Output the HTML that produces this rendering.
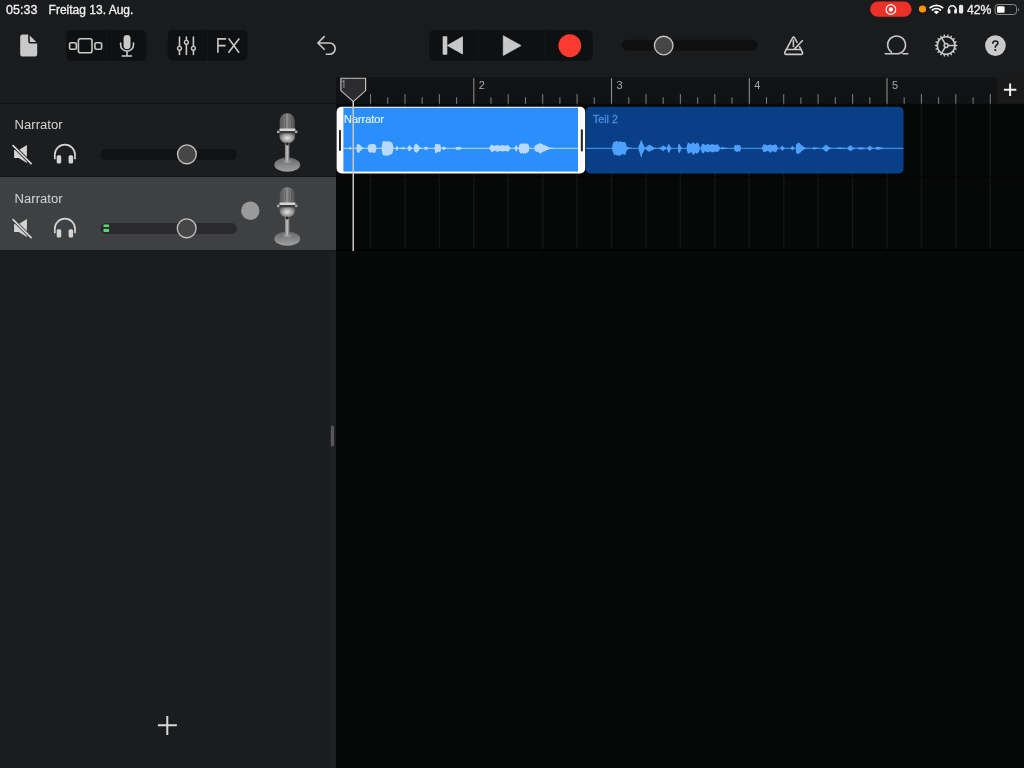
<!DOCTYPE html>
<html><head><meta charset="utf-8">
<style>
html,body{margin:0;padding:0;width:1024px;height:768px;overflow:hidden;background:#1a1b1d;}
svg{display:block;font-family:"Liberation Sans",sans-serif;will-change:transform;}
.st{font-size:12px;font-weight:normal;fill:#f2f2f2;stroke:#f2f2f2;stroke-width:0.3px;}
.rl{font-size:11px;fill:#a8a8a8;}
.tn{font-size:12.5px;fill:#d4d4d4;}
.ic{fill:none;stroke:#c9c9c9;stroke-width:1.6;stroke-linecap:round;stroke-linejoin:round;}
</style></head><body>
<svg width="1024" height="768" viewBox="0 0 1024 768">
<defs>
  <linearGradient id="mcap" x1="0" x2="1" y1="0" y2="0">
    <stop offset="0" stop-color="#555"/><stop offset="0.5" stop-color="#8e8e8e"/><stop offset="1" stop-color="#4e4e4e"/>
  </linearGradient>
  <radialGradient id="mbody" cx="0.5" cy="0.5" r="0.6">
    <stop offset="0" stop-color="#e6e6e6"/><stop offset="0.55" stop-color="#9c9c9c"/><stop offset="1" stop-color="#4a4a4a"/>
  </radialGradient>
  <linearGradient id="mneck" x1="0" x2="1" y1="0" y2="0">
    <stop offset="0" stop-color="#777"/><stop offset="0.5" stop-color="#c4c4c4"/><stop offset="1" stop-color="#666"/>
  </linearGradient>
  <linearGradient id="mbase" x1="0" x2="0" y1="0" y2="1">
    <stop offset="0" stop-color="#666"/><stop offset="1" stop-color="#a2a2a2"/>
  </linearGradient>
</defs>

<!-- backgrounds -->
<rect x="0" y="0" width="1024" height="768" fill="#1a1b1d"/>
<rect x="336" y="103" width="688" height="665" fill="#060707"/>
<rect x="336" y="77.3" width="661" height="26.5" fill="#111213"/>
<rect x="997" y="77.3" width="27" height="26.5" fill="#1a1a1b"/>
<rect x="0" y="103" width="336" height="1.5" fill="#101011"/>
<rect x="0" y="104" width="336" height="73" fill="#1c1d1f"/>
<rect x="0" y="177" width="336" height="73" fill="#3f4042"/><rect x="0" y="176" width="336" height="1" fill="#121314"/><rect x="0" y="250" width="336" height="1.5" fill="#161618"/>
<rect x="0" y="250" width="336" height="518" fill="#1b1c1e"/><rect x="329.5" y="251.5" width="6.5" height="516.5" fill="#1e1f21"/>

<!-- status bar -->
<text x="6" y="14" class="st" textLength="31.4" lengthAdjust="spacingAndGlyphs">05:33</text>
<text x="48.6" y="14" class="st" textLength="84.8" lengthAdjust="spacingAndGlyphs">Freitag 13. Aug.</text>
<rect x="870.2" y="1.6" width="41.4" height="15.2" rx="7.6" fill="#ee3128"/>
<circle cx="890.9" cy="9.5" r="4.8" fill="none" stroke="#fff" stroke-width="1.2"/>
<circle cx="890.9" cy="9.5" r="2.2" fill="#fff"/>
<circle cx="922.5" cy="9" r="3.6" fill="#ff9500"/>
<path d="M930.2,7.6 A9.5,9.5 0 0 1 942.6,7.6 M932.4,10 A6.2,6.2 0 0 1 940.4,10" fill="none" stroke="#fff" stroke-width="1.8" stroke-linecap="round"/>
<path d="M933.8,12 L936.4,14.2 L939,12 A3.8,3.8 0 0 0 933.8,12Z" fill="#fff"/>
<path d="M948.5,11.5 V9.6 A3.8,3.8 0 0 1 956.1,9.6 V11.5" fill="none" stroke="#f4f4f4" stroke-width="1.4"/>
<rect x="947.7" y="9.2" width="2.7" height="4.4" rx="0.9" fill="#f4f4f4"/>
<rect x="954.2" y="9.2" width="2.7" height="4.4" rx="0.9" fill="#f4f4f4"/>
<rect x="958.9" y="4.8" width="4.3" height="8.8" rx="1.6" fill="#e6e6e6"/>
<text x="967" y="14.3" class="st" style="font-size:12px" textLength="24.5" lengthAdjust="spacingAndGlyphs">42%</text>
<rect x="995.1" y="4.5" width="21.4" height="10" rx="3" fill="none" stroke="#8a8a8a" stroke-width="1"/>
<rect x="997" y="6.3" width="7.6" height="6.4" rx="1.3" fill="#fff"/>
<path d="M1018,8 A1.8,1.8 0 0 1 1018,11.3 Z" fill="#8a8a8a"/>

<!-- toolbar -->
<path d="M22.5,34.6 H28.8 L37.2,43 V54.3 A2.3,2.3 0 0 1 34.9,56.6 H22.5 A2.3,2.3 0 0 1 20.2,54.3 V36.9 A2.3,2.3 0 0 1 22.5,34.6 Z" fill="#c9c9c9"/>
<path d="M29,33.6 V41.5 A1.3,1.3 0 0 0 30.3,42.8 H38.2" fill="none" stroke="#1a1b1d" stroke-width="1.6"/>

<rect x="66.3" y="29.7" width="80.1" height="31.1" rx="5" fill="#0f1011"/>
<rect x="106.1" y="29.8" width="1.2" height="31" fill="#151618"/>
<rect x="69.6" y="42.8" width="6.7" height="6.5" rx="1.3" class="ic"/>
<rect x="78.4" y="38.8" width="13.6" height="14" rx="2" class="ic"/>
<rect x="94.9" y="42.8" width="6.7" height="6.5" rx="1.3" class="ic"/>
<rect x="123.6" y="34.9" width="6.9" height="14.2" rx="3.45" fill="#c9c9c9"/>
<path d="M120.6,43 V44.65 A6.45,6.45 0 0 0 133.5,44.65 V43 M127.05,51.5 V55.5 M122.2,56 H131.6" class="ic"/>

<rect x="167.8" y="29.7" width="79.6" height="31.1" rx="5" fill="#0f1011"/>
<rect x="206.9" y="29.8" width="1.2" height="31" fill="#151618"/>
<path d="M179.5,37 V54.5 M186.4,37 V54.5 M193.4,37 V54.5" class="ic"/>
<circle cx="179.5" cy="48.3" r="1.95" fill="#0f1011" stroke="#c9c9c9" stroke-width="1.4"/>
<circle cx="186.4" cy="42.3" r="1.95" fill="#0f1011" stroke="#c9c9c9" stroke-width="1.4"/>
<circle cx="193.4" cy="48.3" r="1.95" fill="#0f1011" stroke="#c9c9c9" stroke-width="1.4"/>
<path d="M217.9,52.7 V38.9 H226.1 M217.9,45.6 H225.6" class="ic" style="stroke-linecap:butt;stroke-linejoin:miter"/>
<path d="M228.6,38.4 L239.1,52.8 M239.3,38.4 L228.4,52.8" class="ic" style="stroke-linecap:butt"/>

<path d="M324.2,36.6 L317.9,43 L324.2,49.3 M318.4,43 H329.6 A5.6,5.6 0 0 1 329.6,54.2 H326.3" class="ic"/>

<rect x="429.3" y="29.7" width="163.5" height="31.1" rx="5" fill="#0f1011"/>
<rect x="477.4" y="29.8" width="1.2" height="31" fill="#151618"/>
<rect x="544.1" y="29.8" width="1.2" height="31" fill="#151618"/>
<rect x="442.7" y="36.2" width="4.6" height="18.5" rx="0.8" fill="#c9c9c9"/>
<path d="M462.5,36.8 V54 L447.4,45.4 Z" fill="#c9c9c9" stroke="#c9c9c9" stroke-width="0.8" stroke-linejoin="round"/>
<path d="M503.3,35.8 V55.4 L521,45.6 Z" fill="#c9c9c9" stroke="#c9c9c9" stroke-width="0.8" stroke-linejoin="round"/>
<circle cx="569.8" cy="45.6" r="11.4" fill="#fe3b30"/>

<rect x="621.7" y="39.8" width="136" height="10.6" rx="5.3" fill="#0f0f10"/>
<circle cx="663.7" cy="45.5" r="9.3" fill="#464647" stroke="#c2c2c2" stroke-width="1.35"/>

<path d="M797.1,42.3 L794.6,37.9 Q793.6,36.4 792.6,37.9 L784.9,52.1 Q784.2,54.4 786.3,54.4 H801 Q803.1,54.4 802.4,52.1 L799.5,46.6" class="ic"/>
<path d="M786.3,49.5 H801 M793.4,40.4 V46.4 M802.3,40.7 L794.6,48.9" class="ic"/>

<path d="M885.3,53.8 H896.5 A8.9,8.9 0 1 0 891.5,52.2 M902.9,53.8 H907.8" class="ic"/>

<path d="M955.36,43.87 L955.46,44.60 L957.39,45.11 L957.39,45.89 L955.46,46.40 L955.36,47.13 L955.20,47.85 L956.85,48.99 L956.58,49.73 L954.58,49.55 L954.24,50.20 L953.85,50.82 L955.00,52.46 L954.50,53.06 L952.69,52.20 L952.14,52.70 L951.56,53.15 L952.09,55.08 L951.41,55.48 L950.00,54.05 L949.31,54.33 L948.61,54.56 L948.45,56.55 L947.67,56.69 L946.84,54.87 L946.10,54.90 L945.36,54.87 L944.53,56.69 L943.75,56.55 L943.59,54.56 L942.89,54.33 L942.20,54.05 L940.79,55.48 L940.11,55.08 L940.64,53.15 L940.06,52.70 L939.51,52.20 L937.70,53.06 L937.20,52.46 L938.35,50.82 L937.96,50.20 L937.62,49.55 L935.62,49.73 L935.35,48.99 L937.00,47.85 L936.84,47.13 L936.74,46.40 L934.81,45.89 L934.81,45.11 L936.74,44.60 L936.84,43.87 L937.00,43.15 L935.35,42.01 L935.62,41.27 L937.62,41.45 L937.96,40.80 L938.35,40.18 L937.20,38.54 L937.70,37.94 L939.51,38.80 L940.06,38.30 L940.64,37.85 L940.11,35.92 L940.79,35.52 L942.20,36.95 L942.89,36.67 L943.59,36.44 L943.75,34.45 L944.53,34.31 L945.36,36.13 L946.10,36.10 L946.84,36.13 L947.67,34.31 L948.45,34.45 L948.61,36.44 L949.31,36.67 L950.00,36.95 L951.41,35.52 L952.09,35.92 L951.56,37.85 L952.14,38.30 L952.69,38.80 L954.50,37.94 L955.00,38.54 L953.85,40.18 L954.24,40.80 L954.58,41.45 L956.58,41.27 L956.85,42.01 L955.20,43.15Z" fill="#c9c9c9"/>
<circle cx="946.1" cy="45.5" r="8.75" fill="#1a1b1d" stroke="#c9c9c9" stroke-width="1.5"/>
<path d="M948,45.5 H954.9 M945.15,47.15 L941.7,53.1 M945.15,43.85 L941.7,37.9" class="ic" style="stroke-width:1.5"/>
<circle cx="946.1" cy="45.5" r="2" fill="none" stroke="#c9c9c9" stroke-width="1.4"/>

<circle cx="995.4" cy="45.6" r="10.4" fill="#c9c9c9"/>
<path d="M992.9,43.2 C992.9,41.7 994,41 995.4,41 C996.9,41 997.9,41.9 997.9,43.1 C997.9,44.4 996.9,44.9 996.1,45.5 C995.6,45.9 995.4,46.3 995.4,47.3" fill="none" stroke="#1a1b1d" stroke-width="1.6" stroke-linecap="round"/><circle cx="995.3" cy="50" r="1.1" fill="#1a1b1d"/>

<!-- ruler -->
<line x1="353.3" y1="97.2" x2="353.3" y2="103.8" stroke="#767676" stroke-width="1.1"/><line x1="370.5" y1="94" x2="370.5" y2="103.8" stroke="#767676" stroke-width="1.1"/><line x1="387.7" y1="97.2" x2="387.7" y2="103.8" stroke="#767676" stroke-width="1.1"/><line x1="405.0" y1="94" x2="405.0" y2="103.8" stroke="#767676" stroke-width="1.1"/><line x1="422.2" y1="97.2" x2="422.2" y2="103.8" stroke="#767676" stroke-width="1.1"/><line x1="439.4" y1="94" x2="439.4" y2="103.8" stroke="#767676" stroke-width="1.1"/><line x1="456.6" y1="97.2" x2="456.6" y2="103.8" stroke="#767676" stroke-width="1.1"/><line x1="473.8" y1="78" x2="473.8" y2="103.8" stroke="#8a8a8a" stroke-width="1.1"/><line x1="491.0" y1="97.2" x2="491.0" y2="103.8" stroke="#767676" stroke-width="1.1"/><line x1="508.2" y1="94" x2="508.2" y2="103.8" stroke="#767676" stroke-width="1.1"/><line x1="525.5" y1="97.2" x2="525.5" y2="103.8" stroke="#767676" stroke-width="1.1"/><line x1="542.7" y1="94" x2="542.7" y2="103.8" stroke="#767676" stroke-width="1.1"/><line x1="559.9" y1="97.2" x2="559.9" y2="103.8" stroke="#767676" stroke-width="1.1"/><line x1="577.1" y1="94" x2="577.1" y2="103.8" stroke="#767676" stroke-width="1.1"/><line x1="594.3" y1="97.2" x2="594.3" y2="103.8" stroke="#767676" stroke-width="1.1"/><line x1="611.5" y1="78" x2="611.5" y2="103.8" stroke="#8a8a8a" stroke-width="1.1"/><line x1="628.8" y1="97.2" x2="628.8" y2="103.8" stroke="#767676" stroke-width="1.1"/><line x1="646.0" y1="94" x2="646.0" y2="103.8" stroke="#767676" stroke-width="1.1"/><line x1="663.2" y1="97.2" x2="663.2" y2="103.8" stroke="#767676" stroke-width="1.1"/><line x1="680.4" y1="94" x2="680.4" y2="103.8" stroke="#767676" stroke-width="1.1"/><line x1="697.6" y1="97.2" x2="697.6" y2="103.8" stroke="#767676" stroke-width="1.1"/><line x1="714.8" y1="94" x2="714.8" y2="103.8" stroke="#767676" stroke-width="1.1"/><line x1="732.0" y1="97.2" x2="732.0" y2="103.8" stroke="#767676" stroke-width="1.1"/><line x1="749.3" y1="78" x2="749.3" y2="103.8" stroke="#8a8a8a" stroke-width="1.1"/><line x1="766.5" y1="97.2" x2="766.5" y2="103.8" stroke="#767676" stroke-width="1.1"/><line x1="783.7" y1="94" x2="783.7" y2="103.8" stroke="#767676" stroke-width="1.1"/><line x1="800.9" y1="97.2" x2="800.9" y2="103.8" stroke="#767676" stroke-width="1.1"/><line x1="818.1" y1="94" x2="818.1" y2="103.8" stroke="#767676" stroke-width="1.1"/><line x1="835.3" y1="97.2" x2="835.3" y2="103.8" stroke="#767676" stroke-width="1.1"/><line x1="852.6" y1="94" x2="852.6" y2="103.8" stroke="#767676" stroke-width="1.1"/><line x1="869.8" y1="97.2" x2="869.8" y2="103.8" stroke="#767676" stroke-width="1.1"/><line x1="887.0" y1="78" x2="887.0" y2="103.8" stroke="#8a8a8a" stroke-width="1.1"/><line x1="904.2" y1="97.2" x2="904.2" y2="103.8" stroke="#767676" stroke-width="1.1"/><line x1="921.4" y1="94" x2="921.4" y2="103.8" stroke="#767676" stroke-width="1.1"/><line x1="938.6" y1="97.2" x2="938.6" y2="103.8" stroke="#767676" stroke-width="1.1"/><line x1="955.8" y1="94" x2="955.8" y2="103.8" stroke="#767676" stroke-width="1.1"/><line x1="973.1" y1="97.2" x2="973.1" y2="103.8" stroke="#767676" stroke-width="1.1"/><line x1="990.3" y1="94" x2="990.3" y2="103.8" stroke="#767676" stroke-width="1.1"/>
<text x="478.8" y="88.5" class="rl">2</text><text x="616.5" y="88.5" class="rl">3</text><text x="754.3" y="88.5" class="rl">4</text><text x="892.0" y="88.5" class="rl">5</text>
<path d="M1003.9,89.7 H1016.3 M1010.1,83.5 V95.9" stroke="#f0f0f0" stroke-width="2" fill="none"/>

<!-- grid -->
<line x1="370.5" y1="104" x2="370.5" y2="249.5" stroke="#131414" stroke-width="1.6"/><line x1="405.0" y1="104" x2="405.0" y2="249.5" stroke="#131414" stroke-width="1.6"/><line x1="439.4" y1="104" x2="439.4" y2="249.5" stroke="#131414" stroke-width="1.6"/><line x1="473.8" y1="104" x2="473.8" y2="249.5" stroke="#131414" stroke-width="1.6"/><line x1="508.2" y1="104" x2="508.2" y2="249.5" stroke="#131414" stroke-width="1.6"/><line x1="542.7" y1="104" x2="542.7" y2="249.5" stroke="#131414" stroke-width="1.6"/><line x1="577.1" y1="104" x2="577.1" y2="249.5" stroke="#131414" stroke-width="1.6"/><line x1="611.5" y1="104" x2="611.5" y2="249.5" stroke="#131414" stroke-width="1.6"/><line x1="646.0" y1="104" x2="646.0" y2="249.5" stroke="#131414" stroke-width="1.6"/><line x1="680.4" y1="104" x2="680.4" y2="249.5" stroke="#131414" stroke-width="1.6"/><line x1="714.8" y1="104" x2="714.8" y2="249.5" stroke="#131414" stroke-width="1.6"/><line x1="749.3" y1="104" x2="749.3" y2="249.5" stroke="#131414" stroke-width="1.6"/><line x1="783.7" y1="104" x2="783.7" y2="249.5" stroke="#131414" stroke-width="1.6"/><line x1="818.1" y1="104" x2="818.1" y2="249.5" stroke="#131414" stroke-width="1.6"/><line x1="852.6" y1="104" x2="852.6" y2="249.5" stroke="#131414" stroke-width="1.6"/><line x1="887.0" y1="104" x2="887.0" y2="249.5" stroke="#131414" stroke-width="1.6"/><line x1="921.4" y1="104" x2="921.4" y2="249.5" stroke="#131414" stroke-width="1.6"/><line x1="955.8" y1="104" x2="955.8" y2="249.5" stroke="#131414" stroke-width="1.6"/><line x1="990.3" y1="104" x2="990.3" y2="249.5" stroke="#131414" stroke-width="1.6"/>
<rect x="336" y="176.5" width="688" height="1" fill="#050505"/>
<rect x="336" y="249.3" width="688" height="1.8" fill="#020202"/>

<!-- regions -->
<rect x="336.6" y="106.8" width="248.6" height="66.6" rx="5" fill="#ffffff"/>
<rect x="343.4" y="107.8" width="234.6" height="63.8" fill="#2b8ffb"/>
<rect x="339" y="129.7" width="2" height="21.3" rx="1" fill="#2a2a2a"/>
<rect x="580.8" y="129.2" width="2.1" height="22.4" rx="1" fill="#2a2a2a"/>
<text x="344" y="122.9" style="font-size:10.5px;fill:#e4f0ff;stroke:#e4f0ff;stroke-width:0.2px" textLength="40" lengthAdjust="spacingAndGlyphs">Narrator</text>
<rect x="343.4" y="147.8" width="234.6" height="1" fill="#b4d6fc"/>
<path d="M349.5,147.8 L350.2,146.5 L350.8,147.2 L351.5,147.8 L351.5,148.7 L350.8,149.2 L350.2,150.2 L349.5,148.8Z M356.5,145.6 L357.3,144.5 L358.2,143.8 L359.0,143.9 L359.8,144.9 L360.7,145.6 L361.5,146.5 L362.3,147.3 L363.2,147.8 L364.0,147.8 L364.0,148.8 L363.2,148.8 L362.3,149.2 L361.5,150.0 L360.7,150.7 L359.8,151.6 L359.0,153.3 L358.2,152.4 L357.3,152.5 L356.5,150.7Z M367.5,147.8 L368.3,145.0 L369.1,144.4 L370.0,144.2 L370.8,144.0 L371.6,144.3 L372.4,143.9 L373.2,144.1 L374.0,143.8 L374.9,144.3 L375.7,145.3 L376.5,147.8 L376.5,148.7 L375.7,151.2 L374.9,152.9 L374.0,153.1 L373.2,152.6 L372.4,152.3 L371.6,152.7 L370.8,152.5 L370.0,152.2 L369.1,152.5 L368.3,151.2 L367.5,148.8Z M381.5,147.8 L382.3,142.9 L383.1,141.0 L383.9,141.2 L384.7,141.4 L385.5,141.0 L386.3,141.5 L387.1,142.1 L387.9,141.3 L388.7,141.0 L389.5,141.6 L390.3,142.1 L391.1,141.9 L391.9,142.4 L392.7,144.1 L393.5,147.8 L393.5,148.9 L392.7,152.2 L391.9,154.6 L391.1,153.9 L390.3,154.4 L389.5,155.3 L388.7,155.1 L387.9,156.4 L387.1,154.9 L386.3,155.4 L385.5,156.6 L384.7,155.1 L383.9,155.6 L383.1,155.2 L382.3,153.8 L381.5,148.8Z M395.5,147.6 L396.4,146.3 L397.2,146.0 L398.1,147.4 L399.0,147.8 L399.0,148.9 L398.1,149.1 L397.2,150.5 L396.4,150.5 L395.5,149.0Z M400.5,147.8 L401.0,147.3 L401.5,147.5 L402.0,147.8 L402.0,148.8 L401.5,149.0 L401.0,149.3 L400.5,148.8Z M402.5,147.8 L403.2,146.6 L403.8,147.2 L404.5,147.8 L404.5,148.9 L403.8,149.5 L403.2,150.1 L402.5,148.9Z M407.5,147.4 L408.3,146.4 L409.2,145.3 L410.0,145.6 L410.8,146.7 L411.7,147.6 L412.5,147.8 L412.5,148.7 L411.7,148.9 L410.8,149.8 L410.0,150.7 L409.2,151.4 L408.3,150.2 L407.5,149.3Z M414.0,145.9 L414.8,144.6 L415.7,144.1 L416.5,143.6 L417.3,144.7 L418.2,145.2 L419.0,146.3 L419.8,147.2 L420.7,147.8 L421.5,147.8 L421.5,148.7 L420.7,148.8 L419.8,149.3 L419.0,150.0 L418.2,151.4 L417.3,152.3 L416.5,152.8 L415.7,152.2 L414.8,152.1 L414.0,150.4Z M424.0,147.8 L424.8,147.1 L425.5,146.8 L426.2,146.4 L427.0,147.2 L427.8,147.6 L428.5,147.8 L428.5,148.8 L427.8,149.1 L427.0,149.4 L426.2,150.3 L425.5,150.0 L424.8,149.3 L424.0,148.7Z M434.5,147.8 L435.3,143.7 L436.1,143.9 L436.9,143.9 L437.8,144.1 L438.6,144.5 L439.4,144.3 L440.2,144.3 L441.0,147.8 L441.0,148.9 L440.2,152.8 L439.4,152.0 L438.6,151.6 L437.8,152.3 L436.9,152.3 L436.1,153.2 L435.3,153.4 L434.5,148.8Z M441.5,147.8 L442.2,147.3 L443.0,147.0 L443.8,146.6 L444.5,146.8 L445.2,147.4 L446.0,147.8 L446.0,148.8 L445.2,149.3 L444.5,149.8 L443.8,150.2 L443.0,149.4 L442.2,149.2 L441.5,148.8Z M455.5,147.8 L456.2,146.9 L457.0,146.9 L457.8,146.9 L458.5,147.0 L459.2,146.8 L460.0,147.0 L460.8,147.1 L461.5,147.8 L461.5,148.7 L460.8,149.6 L460.0,149.4 L459.2,149.9 L458.5,149.6 L457.8,150.0 L457.0,149.7 L456.2,149.5 L455.5,148.8Z M489.0,147.8 L489.8,146.8 L490.6,145.8 L491.4,144.5 L492.2,144.9 L493.0,145.2 L493.8,145.4 L494.6,146.0 L495.4,145.5 L496.2,145.2 L497.0,145.2 L497.8,145.1 L498.6,145.2 L499.4,145.8 L500.1,145.7 L500.9,145.3 L501.7,145.0 L502.5,145.3 L503.3,145.3 L504.1,145.2 L504.9,145.9 L505.7,145.6 L506.5,145.5 L507.3,145.1 L508.1,144.9 L508.9,145.9 L509.7,146.8 L510.5,147.8 L510.5,148.8 L509.7,149.8 L508.9,150.9 L508.1,151.8 L507.3,151.3 L506.5,151.2 L505.7,151.3 L504.9,150.7 L504.1,151.4 L503.3,151.3 L502.5,151.6 L501.7,151.3 L500.9,150.9 L500.1,150.9 L499.4,151.1 L498.6,151.8 L497.8,151.5 L497.0,151.8 L496.2,151.3 L495.4,151.1 L494.6,150.5 L493.8,150.9 L493.0,151.7 L492.2,152.1 L491.4,152.2 L490.6,150.4 L489.8,149.8 L489.0,148.8Z M514.5,147.5 L515.3,146.4 L516.1,144.8 L516.9,146.3 L517.7,147.6 L518.5,147.8 L518.5,148.9 L517.7,149.1 L516.9,150.6 L516.1,152.0 L515.3,150.2 L514.5,149.1Z M518.5,147.8 L519.3,145.0 L520.1,144.0 L520.9,143.3 L521.6,143.9 L522.4,143.4 L523.2,143.2 L524.0,143.8 L524.8,143.7 L525.6,143.1 L526.4,143.9 L527.1,143.6 L527.9,144.0 L528.7,144.9 L529.5,147.8 L529.5,148.8 L528.7,151.2 L527.9,152.4 L527.1,152.8 L526.4,152.6 L525.6,154.0 L524.8,152.9 L524.0,153.4 L523.2,154.1 L522.4,152.7 L521.6,153.0 L520.9,153.9 L520.1,152.9 L519.3,151.4 L518.5,148.8Z M534.5,145.9 L535.3,145.4 L536.1,144.8 L536.9,144.4 L537.7,144.5 L538.5,143.7 L539.3,143.8 L540.1,142.8 L540.9,143.8 L541.7,143.7 L542.5,144.2 L543.3,145.0 L544.2,145.2 L545.0,145.3 L545.8,145.7 L546.6,146.1 L547.4,146.4 L548.2,146.9 L549.0,147.1 L549.8,147.5 L550.6,147.7 L551.4,147.8 L552.2,147.8 L553.0,147.8 L553.0,148.8 L552.2,148.8 L551.4,148.7 L550.6,148.8 L549.8,149.1 L549.0,149.4 L548.2,149.7 L547.4,150.1 L546.6,150.2 L545.8,150.5 L545.0,151.4 L544.2,151.0 L543.3,151.8 L542.5,151.9 L541.7,153.0 L540.9,152.4 L540.1,154.3 L539.3,152.7 L538.5,152.6 L537.7,151.6 L536.9,151.7 L536.1,152.1 L535.3,150.8 L534.5,150.8Z" fill="#b9d9fc"/>

<rect x="585.8" y="106.8" width="317.7" height="66.6" rx="4.5" fill="#093f87"/>
<text x="593" y="122.6" style="font-size:10.5px;fill:#4a8fe0;stroke:#4a8fe0;stroke-width:0.3px" textLength="24.8" lengthAdjust="spacingAndGlyphs">Teil 2</text>
<rect x="586" y="147.8" width="317.5" height="1" fill="#4a9cf8"/>
<path d="M612.0,147.8 L612.8,144.0 L613.6,142.3 L614.4,141.3 L615.2,142.0 L615.9,141.0 L616.7,141.1 L617.5,141.6 L618.3,141.7 L619.1,141.3 L619.9,141.8 L620.7,141.3 L621.5,141.7 L622.3,142.2 L623.1,142.1 L623.8,141.9 L624.6,142.1 L625.4,142.2 L626.2,144.5 L627.0,147.8 L627.0,148.8 L626.2,151.8 L625.4,154.7 L624.6,155.1 L623.8,154.1 L623.1,154.9 L622.3,153.8 L621.5,154.6 L620.7,155.6 L619.9,155.5 L619.1,156.3 L618.3,154.9 L617.5,155.7 L616.7,155.3 L615.9,154.7 L615.2,154.6 L614.4,155.5 L613.6,153.4 L612.8,152.0 L612.0,148.8Z M626.0,146.7 L626.8,146.4 L627.5,146.8 L628.2,147.1 L629.0,147.5 L629.8,147.7 L630.5,147.8 L631.2,147.8 L632.0,147.8 L632.0,148.7 L631.2,148.7 L630.5,148.8 L629.8,148.9 L629.0,149.0 L628.2,149.5 L627.5,149.7 L626.8,150.5 L626.0,149.8Z M638.5,146.4 L639.3,144.7 L640.1,142.7 L640.8,140.5 L641.6,140.2 L642.4,142.5 L643.2,143.9 L643.9,145.8 L644.7,147.4 L645.5,147.8 L645.5,148.8 L644.7,149.3 L643.9,150.9 L643.2,152.2 L642.4,153.8 L641.6,157.4 L640.8,156.4 L640.1,153.9 L639.3,151.6 L638.5,150.0Z M645.5,147.4 L646.3,146.9 L647.1,146.3 L647.9,145.8 L648.7,145.1 L649.5,144.6 L650.3,145.3 L651.2,145.7 L652.0,146.1 L652.8,146.7 L653.6,147.2 L654.4,147.7 L655.2,147.8 L656.0,147.8 L656.0,148.8 L655.2,148.8 L654.4,148.9 L653.6,149.4 L652.8,149.9 L652.0,150.5 L651.2,150.6 L650.3,150.9 L649.5,151.7 L648.7,151.6 L647.9,150.9 L647.1,150.4 L646.3,149.7 L645.5,149.1Z M658.5,147.8 L659.3,147.8 L660.1,147.6 L660.9,147.1 L661.7,146.7 L662.5,146.1 L663.3,145.4 L664.1,146.1 L664.9,146.8 L665.7,147.1 L666.5,147.6 L666.5,148.9 L665.7,149.4 L664.9,149.7 L664.1,150.3 L663.3,151.3 L662.5,150.6 L661.7,149.9 L660.9,149.6 L660.1,148.9 L659.3,148.8 L658.5,148.8Z M667.0,147.0 L667.8,145.3 L668.5,143.7 L669.2,143.9 L670.0,145.9 L670.8,147.3 L671.5,147.8 L671.5,148.7 L670.8,149.4 L670.0,151.0 L669.2,152.6 L668.5,152.9 L667.8,151.5 L667.0,149.6Z M678.0,145.5 L678.8,143.8 L679.6,144.0 L680.4,145.7 L681.2,147.3 L682.0,147.8 L682.0,148.7 L681.2,149.3 L680.4,150.9 L679.6,153.2 L678.8,152.5 L678.0,151.5Z M686.5,147.8 L687.3,144.6 L688.1,142.2 L688.9,143.2 L689.7,142.9 L690.5,143.9 L691.3,144.2 L692.1,142.8 L692.9,142.3 L693.6,143.1 L694.4,142.9 L695.2,144.2 L696.0,143.8 L696.8,142.8 L697.6,142.6 L698.4,143.4 L699.2,144.9 L700.0,147.8 L700.0,148.8 L699.2,151.5 L698.4,152.7 L697.6,153.6 L696.8,153.6 L696.0,153.4 L695.2,152.2 L694.4,154.4 L693.6,154.2 L692.9,154.9 L692.1,153.0 L691.3,152.2 L690.5,152.2 L689.7,153.6 L688.9,152.7 L688.1,154.3 L687.3,151.7 L686.5,148.9Z M700.5,147.8 L701.3,146.2 L702.1,144.3 L702.9,143.9 L703.8,143.8 L704.6,144.5 L705.4,145.2 L706.2,144.5 L707.0,144.4 L707.8,143.6 L708.6,144.2 L709.4,144.8 L710.2,145.1 L711.1,144.5 L711.9,144.1 L712.7,144.3 L713.5,144.4 L714.3,144.7 L715.1,145.1 L715.9,144.7 L716.8,144.4 L717.6,144.1 L718.4,145.2 L719.2,146.3 L720.0,147.8 L720.0,148.8 L719.2,150.5 L718.4,151.2 L717.6,152.0 L716.8,151.7 L715.9,151.5 L715.1,152.0 L714.3,151.6 L713.5,152.6 L712.7,151.9 L711.9,152.4 L711.1,151.8 L710.2,151.3 L709.4,152.0 L708.6,152.2 L707.8,152.5 L707.0,151.7 L706.2,152.3 L705.4,151.3 L704.6,151.6 L703.8,152.9 L702.9,153.3 L702.1,152.7 L701.3,150.7 L700.5,148.8Z M720.5,147.8 L721.2,147.5 L722.0,147.3 L722.8,147.3 L723.5,147.2 L724.2,147.5 L725.0,147.7 L725.8,147.8 L726.5,147.8 L726.5,148.9 L725.8,148.9 L725.0,148.9 L724.2,149.0 L723.5,149.5 L722.8,149.3 L722.0,149.5 L721.2,149.0 L720.5,148.8Z M734.0,147.8 L734.8,145.0 L735.6,145.1 L736.3,145.2 L737.1,144.9 L737.9,144.8 L738.7,145.4 L739.4,145.1 L740.2,145.3 L741.0,147.8 L741.0,148.8 L740.2,151.5 L739.4,151.7 L738.7,150.9 L737.9,151.5 L737.1,152.1 L736.3,151.8 L735.6,151.1 L734.8,151.6 L734.0,148.8Z M762.0,147.8 L762.8,146.0 L763.6,144.2 L764.4,144.5 L765.2,144.6 L766.0,144.6 L766.8,145.5 L767.6,145.4 L768.4,145.1 L769.2,144.9 L770.0,144.4 L770.8,144.4 L771.6,144.9 L772.4,145.6 L773.2,145.1 L774.0,145.1 L774.8,144.3 L775.6,144.6 L776.4,144.7 L777.2,146.6 L778.0,147.8 L778.0,148.8 L777.2,149.9 L776.4,151.6 L775.6,152.2 L774.8,152.3 L774.0,151.5 L773.2,151.3 L772.4,151.4 L771.6,151.4 L770.8,152.7 L770.0,152.8 L769.2,151.5 L768.4,151.6 L767.6,151.1 L766.8,151.1 L766.0,151.6 L765.2,152.1 L764.4,151.7 L763.6,152.5 L762.8,150.4 L762.0,148.7Z M780.5,147.6 L781.2,146.8 L782.0,145.7 L782.8,146.0 L783.5,147.1 L784.2,147.8 L785.0,147.8 L785.0,148.8 L784.2,148.9 L783.5,149.6 L782.8,150.4 L782.0,150.7 L781.2,149.6 L780.5,149.0Z M791.0,147.6 L791.9,146.3 L792.8,146.1 L793.6,147.3 L794.5,147.8 L794.5,148.7 L793.6,149.2 L792.8,150.3 L791.9,150.1 L791.0,149.0Z M796.0,144.5 L796.8,143.9 L797.6,142.9 L798.4,142.8 L799.2,142.7 L800.0,143.5 L800.8,144.5 L801.7,145.3 L802.5,145.9 L803.3,146.3 L804.1,146.9 L804.9,147.6 L805.7,147.8 L806.5,147.8 L806.5,148.8 L805.7,148.8 L804.9,149.1 L804.1,149.6 L803.3,150.1 L802.5,150.6 L801.7,150.9 L800.8,151.9 L800.0,152.9 L799.2,153.1 L798.4,154.5 L797.6,153.4 L796.8,153.4 L796.0,152.5Z M812.5,147.8 L813.2,147.5 L814.0,147.4 L814.8,147.0 L815.5,147.5 L816.2,147.6 L817.0,147.7 L817.8,147.8 L818.5,147.8 L818.5,148.9 L817.8,148.8 L817.0,148.9 L816.2,149.1 L815.5,149.0 L814.8,149.7 L814.0,149.2 L813.2,149.2 L812.5,148.8Z M822.5,147.4 L823.3,146.9 L824.1,146.4 L825.0,145.4 L825.8,144.6 L826.6,145.2 L827.4,145.5 L828.2,146.4 L829.0,147.0 L829.9,147.5 L830.7,147.8 L831.5,147.8 L831.5,148.8 L830.7,148.8 L829.9,149.1 L829.0,149.6 L828.2,150.1 L827.4,151.4 L826.6,151.4 L825.8,151.4 L825.0,151.3 L824.1,150.3 L823.3,149.6 L822.5,149.2Z M836.0,147.8 L836.8,147.8 L837.6,147.8 L838.5,147.5 L839.3,147.6 L840.1,147.5 L840.9,147.5 L841.7,147.6 L842.5,147.8 L843.4,147.8 L844.2,147.8 L845.0,147.8 L845.0,148.8 L844.2,148.8 L843.4,148.8 L842.5,148.7 L841.7,149.0 L840.9,149.2 L840.1,149.0 L839.3,148.9 L838.5,149.1 L837.6,148.8 L836.8,148.8 L836.0,148.8Z M847.5,147.5 L848.3,146.9 L849.2,146.1 L850.0,145.5 L850.8,145.3 L851.7,146.2 L852.5,146.9 L853.3,147.4 L854.2,147.8 L855.0,147.8 L855.0,148.8 L854.2,148.9 L853.3,149.2 L852.5,149.9 L851.7,150.2 L850.8,151.1 L850.0,151.0 L849.2,150.3 L848.3,149.6 L847.5,149.2Z M857.5,147.8 L858.3,147.7 L859.2,147.2 L860.0,147.0 L860.8,147.2 L861.7,147.4 L862.5,147.4 L863.3,147.6 L864.2,147.8 L865.0,147.8 L865.0,148.9 L864.2,148.8 L863.3,149.0 L862.5,149.4 L861.7,149.4 L860.8,149.3 L860.0,149.4 L859.2,149.5 L858.3,148.9 L857.5,148.9Z M867.5,147.6 L868.2,147.1 L869.0,146.5 L869.8,145.8 L870.5,146.1 L871.2,146.9 L872.0,147.4 L872.8,147.8 L873.5,147.8 L873.5,148.8 L872.8,148.8 L872.0,149.1 L871.2,149.6 L870.5,150.3 L869.8,150.9 L869.0,149.9 L868.2,149.4 L867.5,149.0Z M875.5,147.8 L876.3,147.0 L877.2,146.9 L878.0,146.7 L878.8,147.1 L879.7,146.9 L880.5,147.3 L881.3,147.6 L882.2,147.7 L883.0,147.8 L883.0,148.8 L882.2,148.9 L881.3,149.1 L880.5,149.3 L879.7,149.6 L878.8,149.5 L878.0,149.9 L877.2,149.5 L876.3,149.7 L875.5,148.8Z" fill="#4ea0fc"/>

<!-- playhead -->
<rect x="352.5" y="100" width="1.5" height="151" fill="#c8c8c8"/>
<path d="M340.9,78.2 H365.6 V90.6 L353.3,101.6 L340.9,90.6 Z" fill="#2c2c2e" stroke="#c4c4c4" stroke-width="1.15" stroke-linejoin="miter"/>
<path d="M343.9,88 V80.4 L342.3,81.8" fill="none" stroke="#8a8a8a" stroke-width="1.1"/>

<!-- track headers -->
<text x="14.6" y="128.6" class="tn" textLength="47.9" lengthAdjust="spacingAndGlyphs">Narrator</text>
<text x="14.6" y="202.6" class="tn" textLength="47.9" lengthAdjust="spacingAndGlyphs">Narrator</text>

<g transform="translate(0,0)">
  <path d="M14.1,149.9 H18.8 L26.9,144.9 V162.9 L18.8,157.9 H14.1 Z" fill="#d4d4d4"/>
  <path d="M13.1,145.6 L31.1,163.6" stroke="#1c1d1f" stroke-width="3.4"/>
  <path d="M13.1,145.6 L31.1,163.6" stroke="#d4d4d4" stroke-width="1.7" stroke-linecap="round"/>
  <path d="M54.8,159.3 V154.8 A10.1,10.1 0 0 1 75,154.8 V159.3" fill="none" stroke="#d4d4d4" stroke-width="1.7"/>
  <rect x="56.7" y="155.3" width="4.5" height="8.3" rx="1.5" fill="#d4d4d4"/>
  <rect x="68.6" y="155.3" width="4.5" height="8.3" rx="1.5" fill="#d4d4d4"/>
  <rect x="100.3" y="148.9" width="136.6" height="11.2" rx="5.6" fill="#111213"/>
</g>
<g transform="translate(0,74)">
  <path d="M14.1,149.9 H18.8 L26.9,144.9 V162.9 L18.8,157.9 H14.1 Z" fill="#d4d4d4"/>
  <path d="M13.1,145.6 L31.1,163.6" stroke="#3f4042" stroke-width="3.4"/>
  <path d="M13.1,145.6 L31.1,163.6" stroke="#d4d4d4" stroke-width="1.7" stroke-linecap="round"/>
  <path d="M54.8,159.3 V154.8 A10.1,10.1 0 0 1 75,154.8 V159.3" fill="none" stroke="#d4d4d4" stroke-width="1.7"/>
  <rect x="56.7" y="155.3" width="4.5" height="8.3" rx="1.5" fill="#d4d4d4"/>
  <rect x="68.6" y="155.3" width="4.5" height="8.3" rx="1.5" fill="#d4d4d4"/>
  <rect x="100.3" y="148.9" width="136.6" height="11.2" rx="5.6" fill="#2a2a2c"/>
</g>
<circle cx="186.9" cy="154.3" r="9.4" fill="#464647" stroke="#c2c2c2" stroke-width="1.35"/>
<rect x="103.5" y="224.6" width="5.6" height="2.5" rx="0.6" fill="#4ce060"/>
<rect x="103.7" y="227.5" width="5.4" height="1.3" fill="#6a1a72"/>
<rect x="103.5" y="229.1" width="5.6" height="2.8" rx="0.6" fill="#4ce060"/>
<circle cx="186.7" cy="228.3" r="9.4" fill="#464647" stroke="#c2c2c2" stroke-width="1.35"/>
<circle cx="250.3" cy="210.7" r="9.2" fill="#9a9a9b"/>

<g transform="translate(0,0)">
  <ellipse cx="287.3" cy="164.7" rx="12.9" ry="7.1" fill="url(#mbase)"/>
  <ellipse cx="287.3" cy="161.2" rx="3.6" ry="1.9" fill="#9a9a9a"/>
  <rect x="284.9" y="143.5" width="4.6" height="18" fill="url(#mneck)"/>
  <path d="M279.4,132.5 H295.2 V136 A7.9,7.6 0 0 1 279.4,136 Z" fill="url(#mbody)"/>
  <circle cx="287.2" cy="144" r="1.5" fill="#2b2b2b"/>
  <rect x="279.6" y="130.6" width="15.6" height="2.6" fill="#3c3c3c"/>
  <path d="M279.7,128.9 V120.8 A7.55,7.5 0 0 1 294.8,120.8 V128.9 Z" fill="url(#mcap)"/>
  <path d="M283,116 V128.5 M285.5,114.5 V128.5 M289,114.5 V128.5 M291.5,116 V128.5" stroke="#3a3a3a" stroke-width="0.6" opacity="0.6"/>
  <rect x="279.3" y="128.6" width="16.2" height="2.3" rx="0.8" fill="#d6d6d6"/>
  <circle cx="278.2" cy="131.9" r="1.4" fill="#a8a8a8"/>
  <circle cx="296.2" cy="131.9" r="1.4" fill="#a8a8a8"/>
</g>
<g transform="translate(0,74)">
  <ellipse cx="287.3" cy="164.7" rx="12.9" ry="7.1" fill="url(#mbase)"/>
  <ellipse cx="287.3" cy="161.2" rx="3.6" ry="1.9" fill="#9a9a9a"/>
  <rect x="284.9" y="143.5" width="4.6" height="18" fill="url(#mneck)"/>
  <path d="M279.4,132.5 H295.2 V136 A7.9,7.6 0 0 1 279.4,136 Z" fill="url(#mbody)"/>
  <circle cx="287.2" cy="144" r="1.5" fill="#2b2b2b"/>
  <rect x="279.6" y="130.6" width="15.6" height="2.6" fill="#3c3c3c"/>
  <path d="M279.7,128.9 V120.8 A7.55,7.5 0 0 1 294.8,120.8 V128.9 Z" fill="url(#mcap)"/>
  <path d="M283,116 V128.5 M285.5,114.5 V128.5 M289,114.5 V128.5 M291.5,116 V128.5" stroke="#3a3a3a" stroke-width="0.6" opacity="0.6"/>
  <rect x="279.3" y="128.6" width="16.2" height="2.3" rx="0.8" fill="#d6d6d6"/>
  <circle cx="278.2" cy="131.9" r="1.4" fill="#a8a8a8"/>
  <circle cx="296.2" cy="131.9" r="1.4" fill="#a8a8a8"/>
</g>
<rect x="330.8" y="425.6" width="3.2" height="21" rx="1.6" fill="#58585a"/>
<path d="M157.9,725.3 H176.9 M167.3,715.9 V735" stroke="#d8d8d8" stroke-width="2" fill="none"/>
</svg>
</body></html>
